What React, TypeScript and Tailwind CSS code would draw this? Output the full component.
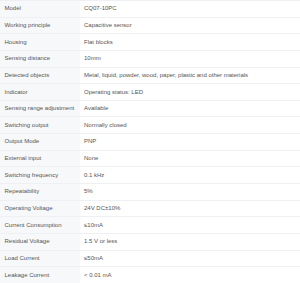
const rows: [string, string][] = [
  ['Model', 'CQ07-10PC'],
  ['Working principle', 'Capacitive sensor'],
  ['Housing', 'Flat blocks'],
  ['Sensing distance', '10mm'],
  ['Detected objects', 'Metal, liquid, powder, wood, paper, plastic and other materials'],
  ['Indicator', 'Operating status: LED'],
  ['Sensing range adjustment', 'Available'],
  ['Switching output', 'Normally closed'],
  ['Output Mode', 'PNP'],
  ['External input', 'None'],
  ['Switching frequency', '0.1 kHz'],
  ['Repeatability', '5%'],
  ['Operating Voltage', '24V DC±10%'],
  ['Current Consumption', '≤10mA'],
  ['Residual Voltage', '1.5 V or less'],
  ['Load Current', '≤50mA'],
  ['Leakage Current', '< 0.01 mA'],
];

export default function App() {
  return (
    <div className="w-[300px] h-[283px] overflow-hidden bg-white font-['Liberation_Sans',Arial,sans-serif] text-[6px] text-[#555]">
      <div className="border-t border-[#eef0f3]">
        {rows.map(([label, value]) => (
          <div key={label} className="flex h-[16.65px] border-b border-[#eef0f3]">
            <div className="w-[80px] shrink-0 bg-[#f7f8fa] pl-[4.5px] flex items-center">{label}</div>
            <div className="flex-1 pl-[4px] flex items-center">{value}</div>
          </div>
        ))}
      </div>
    </div>
  );
}
